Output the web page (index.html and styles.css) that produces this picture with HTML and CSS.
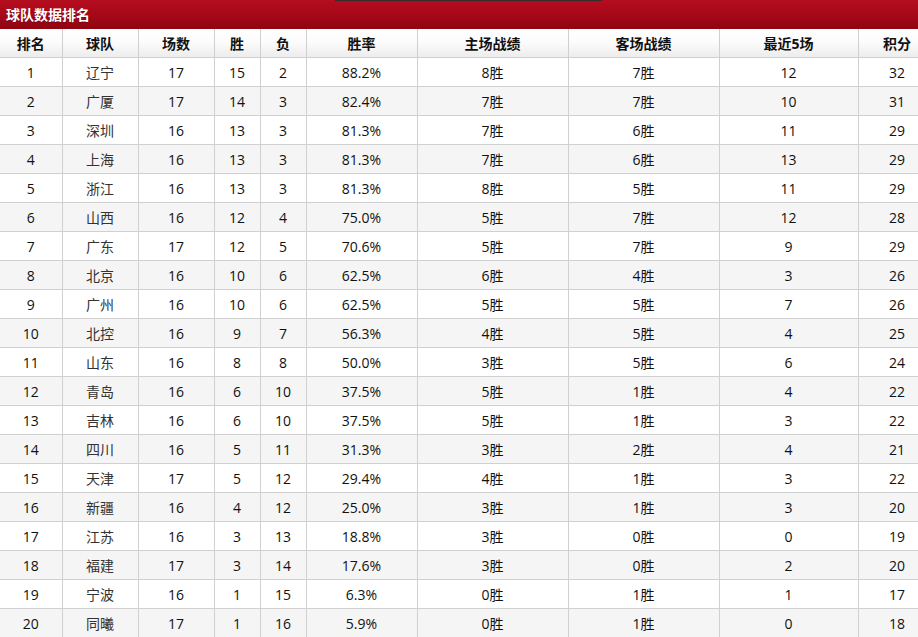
FILE: index.html
```html
<!DOCTYPE html>
<html lang="zh-CN">
<head>
<meta charset="utf-8">
<title>球队数据排名</title>
<link rel="stylesheet" href="styles.css">
</head>
<body>
<div class="panel">
  <div class="title-bar">
    <span class="title">球队数据排名</span>
    <span class="tab-line"></span>
  </div>
  <table class="rank">
    <colgroup>
      <col style="width:62px"><col style="width:76px"><col style="width:76px"><col style="width:46px"><col style="width:46px"><col style="width:111px"><col style="width:151px"><col style="width:151px"><col style="width:139px"><col style="width:78px">
    </colgroup>
    <thead>
      <tr><th>排名</th><th>球队</th><th>场数</th><th>胜</th><th>负</th><th>胜率</th><th>主场战绩</th><th>客场战绩</th><th>最近5场</th><th>积分</th></tr>
    </thead>
    <tbody>
      <tr><td>1</td><td class="team">辽宁</td><td>17</td><td>15</td><td>2</td><td>88.2%</td><td>8胜</td><td>7胜</td><td>12</td><td>32</td></tr>
      <tr><td>2</td><td class="team">广厦</td><td>17</td><td>14</td><td>3</td><td>82.4%</td><td>7胜</td><td>7胜</td><td>10</td><td>31</td></tr>
      <tr><td>3</td><td class="team">深圳</td><td>16</td><td>13</td><td>3</td><td>81.3%</td><td>7胜</td><td>6胜</td><td>11</td><td>29</td></tr>
      <tr><td>4</td><td class="team">上海</td><td>16</td><td>13</td><td>3</td><td>81.3%</td><td>7胜</td><td>6胜</td><td>13</td><td>29</td></tr>
      <tr><td>5</td><td class="team">浙江</td><td>16</td><td>13</td><td>3</td><td>81.3%</td><td>8胜</td><td>5胜</td><td>11</td><td>29</td></tr>
      <tr><td>6</td><td class="team">山西</td><td>16</td><td>12</td><td>4</td><td>75.0%</td><td>5胜</td><td>7胜</td><td>12</td><td>28</td></tr>
      <tr><td>7</td><td class="team">广东</td><td>17</td><td>12</td><td>5</td><td>70.6%</td><td>5胜</td><td>7胜</td><td>9</td><td>29</td></tr>
      <tr><td>8</td><td class="team">北京</td><td>16</td><td>10</td><td>6</td><td>62.5%</td><td>6胜</td><td>4胜</td><td>3</td><td>26</td></tr>
      <tr><td>9</td><td class="team">广州</td><td>16</td><td>10</td><td>6</td><td>62.5%</td><td>5胜</td><td>5胜</td><td>7</td><td>26</td></tr>
      <tr><td>10</td><td class="team">北控</td><td>16</td><td>9</td><td>7</td><td>56.3%</td><td>4胜</td><td>5胜</td><td>4</td><td>25</td></tr>
      <tr><td>11</td><td class="team">山东</td><td>16</td><td>8</td><td>8</td><td>50.0%</td><td>3胜</td><td>5胜</td><td>6</td><td>24</td></tr>
      <tr><td>12</td><td class="team">青岛</td><td>16</td><td>6</td><td>10</td><td>37.5%</td><td>5胜</td><td>1胜</td><td>4</td><td>22</td></tr>
      <tr><td>13</td><td class="team">吉林</td><td>16</td><td>6</td><td>10</td><td>37.5%</td><td>5胜</td><td>1胜</td><td>3</td><td>22</td></tr>
      <tr><td>14</td><td class="team">四川</td><td>16</td><td>5</td><td>11</td><td>31.3%</td><td>3胜</td><td>2胜</td><td>4</td><td>21</td></tr>
      <tr><td>15</td><td class="team">天津</td><td>17</td><td>5</td><td>12</td><td>29.4%</td><td>4胜</td><td>1胜</td><td>3</td><td>22</td></tr>
      <tr><td>16</td><td class="team">新疆</td><td>16</td><td>4</td><td>12</td><td>25.0%</td><td>3胜</td><td>1胜</td><td>3</td><td>20</td></tr>
      <tr><td>17</td><td class="team">江苏</td><td>16</td><td>3</td><td>13</td><td>18.8%</td><td>3胜</td><td>0胜</td><td>0</td><td>19</td></tr>
      <tr><td>18</td><td class="team">福建</td><td>17</td><td>3</td><td>14</td><td>17.6%</td><td>3胜</td><td>0胜</td><td>2</td><td>20</td></tr>
      <tr><td>19</td><td class="team">宁波</td><td>16</td><td>1</td><td>15</td><td>6.3%</td><td>0胜</td><td>1胜</td><td>1</td><td>17</td></tr>
      <tr><td>20</td><td class="team">同曦</td><td>17</td><td>1</td><td>16</td><td>5.9%</td><td>0胜</td><td>1胜</td><td>0</td><td>18</td></tr>
    </tbody>
  </table>
</div>
</body>
</html>
```

FILE: styles.css
```css
html, body {
  margin: 0;
  padding: 0;
  background: #fff;
  overflow: hidden;
}
body {
  font-family: "Open Sans", "Noto Sans CJK SC", sans-serif;
  font-size: 14px;
  color: #111;
}
.panel {
  width: 936px;
}
.title-bar {
  position: relative;
  height: 29px;
  box-sizing: border-box;
  background: linear-gradient(to bottom, #b40d1e 0%, #a50818 55%, #8e0510 100%);
  display: flex;
  align-items: center;
  padding-left: 6px;
}
.title {
  color: #fff;
  font-weight: bold;
  font-size: 14px;
  line-height: 29px;
  text-shadow: 0 1px 1px rgba(0,0,0,0.25);
}
.tab-line {
  position: absolute;
  left: 335px;
  top: 0;
  width: 267px;
  height: 1px;
  background: #3a2a2e;
}
.rank {
  border-collapse: collapse;
  table-layout: fixed;
  width: 936px;
}
.rank th, .rank td {
  border: 1px solid #d0d0d0;
  height: 27px;
  padding: 1px 0 0;
  text-align: center;
  vertical-align: middle;
  line-height: 20px;
  white-space: nowrap;
  overflow: hidden;
}
.rank tr > :first-child {
  border-left: none;
}
.rank th {
  font-weight: bold;
  color: #111;
  background: linear-gradient(to bottom, #ffffff 0%, #fbfbfb 50%, #ececec 100%);
  border-top: none;
}
.rank tbody tr:nth-child(odd) td {
  background: #ffffff;
}
.rank tbody tr:nth-child(even) td {
  background: #f5f5f5;
}
.rank td.team {
  color: #333;
}
```
